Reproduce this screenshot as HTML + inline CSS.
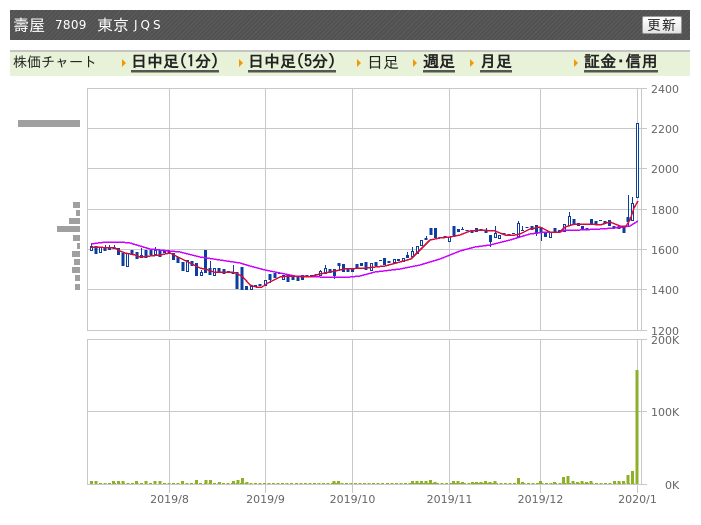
<!DOCTYPE html>
<html lang="ja"><head><meta charset="utf-8"><title>壽屋 7809</title>
<style>
html,body{margin:0;padding:0;background:#fff;width:701px;height:525px;overflow:hidden}
body{position:relative;font-family:"Liberation Sans","IPAGothic",sans-serif}
.a{position:absolute;white-space:nowrap}
#hd{left:10px;top:10px;width:680px;height:30px;background:repeating-linear-gradient(135deg,#5c5c5c 0 1px,#515151 1px 3px)}
.t{color:#fff;font-family:"IPAGothic","Liberation Sans",sans-serif;font-size:16px;line-height:30px;top:10px}
.d{font-family:"DejaVu Sans",sans-serif;font-size:12px}
#btn{left:642px;top:16px;width:38px;height:16px;border:1px solid #999;border-radius:2px;background:linear-gradient(#fff,#e4e4e4);color:#222;font:14px/17px "IPAGothic",sans-serif;text-align:center;letter-spacing:1px}
#sub{left:10px;top:50px;width:680px;height:24px;border-top:2px solid #c4c4c4;background:#e8f2d8}
.n{font:16px/24px "IPAGothic",sans-serif;color:#222;top:50px}
.b{font-weight:bold;color:#222;border-bottom:2px solid #555;box-shadow:0 1px 0 #9aa58c;line-height:17px;height:17px;top:53px}
.ar{width:0;height:0;border-left:4px solid #f39800;border-top:4px solid transparent;border-bottom:4px solid transparent;top:59px}
svg{position:absolute;left:0;top:0}
svg text{font-family:"DejaVu Sans",sans-serif;font-size:11px;fill:#666}
.c{shape-rendering:crispEdges}
</style></head><body>
<div class="a" id="hd"></div>
<div class="a t" style="left:13px">壽屋</div>
<div class="a t d" style="left:55px;letter-spacing:.3px">7809</div>
<div class="a t" style="left:97px">東京</div>
<div class="a t d" style="left:134px;letter-spacing:3px">JQS</div>
<div class="a" id="btn">更新</div>
<div class="a" id="sub"></div>
<div class="a n" style="left:13px;font-size:14px">株価チャート</div>
<div class="a ar" style="left:122px"></div><div class="a n b" style="left:131px">日中足(1分)</div>
<div class="a ar" style="left:239px"></div><div class="a n b" style="left:248px">日中足(5分)</div>
<div class="a ar" style="left:357px"></div><div class="a n" style="left:367px">日足</div>
<div class="a ar" style="left:413px"></div><div class="a n b" style="left:423px">週足</div>
<div class="a ar" style="left:470px"></div><div class="a n b" style="left:480px">月足</div>
<div class="a ar" style="left:574px"></div><div class="a n b" style="left:584px;letter-spacing:.4px">証金･信用</div>
<svg width="701" height="525" viewBox="0 0 701 525">
<path class="c" fill="#a0a0a0" d="M18 120h62v7H18zM73 202h7v6h-7zM76 210h4v6h-4zM69 218h11v6H69zM57 226h23v6H57zM73 235h7v6h-7zM77 243h3v6h-3zM72 251h8v6h-8zM74 259h6v6h-6zM72 267h8v6h-8zM75 275h5v6h-5zM75 284h5v6h-5z"/>
<path class="c" fill="none" stroke="#c8c8c8" d="M87.500 88v242.500M169.500 88v242M265.500 88v242M352.500 88v242M449.500 88v242M540.500 88v242M637.500 88v242M641.500 88v242M87 88.500h560M87 128.500h560M87 168.500h560M87 209.500h560M87 249.500h560M87 289.500h560M87 330.500h560"/>
<path class="c" fill="none" stroke="#c8c8c8" d="M87.500 339v145.500M169.500 339v154M265.500 339v154M352.500 339v154M449.500 339v154M540.500 339v154M637.500 339v154M641.500 339v145M87 339.500h560M87 411.500h560M87 484.500h560"/>
<g text-anchor="start"><text x="651" y="93">2400</text><text x="651" y="133">2200</text><text x="651" y="173">2000</text><text x="651" y="214">1800</text><text x="651" y="254">1600</text><text x="651" y="294">1400</text><text x="651" y="335">1200</text>
<text x="651" y="344">200K</text><text x="651" y="416">100K</text><text x="665" y="489">0K</text></g>
<g text-anchor="middle"><text x="169.500" y="503">2019/8</text><text x="265.500" y="503">2019/9</text><text x="352.500" y="503">2019/10</text><text x="449.500" y="503">2019/11</text><text x="540.500" y="503">2019/12</text><text x="637.500" y="503">2020/1</text></g>
<path class="c" fill="none" stroke="#0a3ea0" d="M91.500 243v3M141.500 248v7M155.500 247v3M105.500 245v2M109.500 245v2M114.500 245v2M201.500 270v2M210.500 261v7M233.500 265v7M270.500 280v3M320.500 270v1M325.500 265v3M334.500 276v3M339.500 266v5M407.500 252v3M412.500 247v4M426.500 236v2M462.500 227v2M486.500 228v2M490.500 242v5M495.500 226v7M518.500 221v2M522.500 226v4M536.500 234v2M541.500 232v9M569.500 212v4M628.500 195v22M628.500 222v4M632.500 197v6"/>
<path class="c" fill="none" stroke="#0a3ea0" stroke-width="3" d="M96 246v8M105 247v4M109.500 247v3M114 247v2M118.500 248v7M123 253v13M132 250v4M137 252v7M141.500 255v3M146 250v8M151 250v5M160 250v7M164.500 251v2M169 251v3M173.500 253v7M178 257v6M183 262v9M192 261v5M196.500 263v13M205.500 250v23M210 268v7M219 268v4M224 269v5M228.500 271v2M233 272v2M237 272v17M242 267v23M246.500 286v4M255.500 285v2M260 284v2M270 274v6M275 273v5M279.500 273v1M288 275v7M293 277v3M298 276v5M302.500 275v5M307 275v1M311.500 275v1M316 274v1M330 269v4M334.500 269v7M339 263v3M343.500 264v8M348 268v4M352.500 268v4M357 264v4M361.500 263v3M366 262v8M376 262v4M380.500 260v1M384.500 258v7M389 261v2M398.500 259v2M407.500 255v3M426 238v2M431 228v7M435.500 228v10M440 237v1M445 236v1M454 226v11M458.500 229v3M462.500 229v1M467 230v1M472 231v2M476.500 228v4M481 229v2M486 230v3M490.500 235v7M504 233v2M509 234v2M513.500 233v1M522.500 230v1M527 227v1M532 226v4M536.500 225v9M541 227v5M545.500 232v5M555 228v4M559.500 230v2M574 219v6M578.500 223v3M582.500 226v4M587 228v1M591.500 219v5M596 221v3M600.500 220v1M605 221v3M609.500 220v6M614 226v2M619 226v3M624 226v7M628 217v5"/>
<path class="c" fill="#fff" stroke="#0a3ea0" d="M90.500 246.500h2v4h-2zM99.500 247.500h2v5h-2zM126.500 253.500h2v13h-2zM154.500 250.500h2v4h-2zM186.500 260.500h2v11h-2zM200.500 272.500h2v3h-2zM213.500 268.500h2v7h-2zM250.500 286.500h2v3h-2zM264.500 280.500h2v5h-2zM282.500 275.500h2v4h-2zM319.500 271.500h2v4h-2zM324.500 268.500h2v5h-2zM370.500 263.500h2v7h-2zM393.500 259.500h2v3h-2zM402.500 258.500h2v3h-2zM411.500 251.500h2v5h-2zM416.500 246.500h2v7h-2zM420.500 240.500h2v5h-2zM448.500 237.500h2v4h-2zM494.500 233.500h2v4h-2zM498.500 235.500h2v3h-2zM517.500 223.500h2v13h-2zM549.500 232.500h2v5h-2zM563.500 224.500h2v7h-2zM568.500 216.500h2v9h-2zM631.500 203.500h2v17h-2zM636.500 123.500h2v74h-2z"/>
<path class="c" fill="none" stroke="#cc00ff" stroke-width="1.500" d="M91 244L98 243L107 242L120 242L130 243L140 246L150 249L160 250L180 252L200 257L220 260L240 263L250 266L265 270L280 273L295 276L320 277L350 277L360 276L375 272L400 269L420 265L440 259L460 251L475 247L490 245L510 240L530 234L545 232L560 232L565 230L580 230L600 229L615 228L630 226L638 221"/>
<path class="c" fill="none" stroke="#d80a3c" stroke-width="1.500" d="M91 247L115 248L120 251L125 253L135 255L140 257L160 255L170 253L180 258L190 263L200 268L208 270L214 272L232 272L236 273L243 277L250 285L256 287L262 287L268 283L280 277L290 276L310 277L320 274L335 271L345 269L365 268L385 266L400 262L411 259L420 250L430 240L440 238L450 237L460 235L470 231L480 230L495 231L505 235L515 235L520 234L530 229L540 227L550 232L560 232L565 227L575 224L590 224L600 225L610 222L620 226L626 226L630 220L634 208L638 201"/>
<path class="c" fill="none" stroke="#8db02a" stroke-width="1" stroke-dasharray="3 1.550" d="M90 483.500H636"/>
<path class="c" fill="none" stroke="#8db02a" stroke-width="3" d="M91.500 484v-3M96 484v-3M113.500 484v-3M118.500 484v-3M123 484v-3M136.500 484v-3M146 484v-3M155 484v-3M160 484v-3M182.500 484v-3M196.500 484v-4M206 484v-4M210.500 484v-4M219.500 484v-2M233.500 484v-3M238 484v-4M242.500 484v-6M247 484v-2M334 484v-3M338.500 484v-3M412.500 484v-3M417 484v-3M421.500 484v-3M426 484v-3M430.500 484v-4M435 484v-2M453.500 484v-3M458 484v-3M462.500 484v-2M472.500 484v-2M476.500 484v-2M481 484v-2M485.500 484v-3M490 484v-2M495 484v-3M518.500 484v-6M522.500 484v-2M540.500 484v-3M554.500 484v-2M563.500 484v-7M568 484v-8M573 484v-3M577.500 484v-2M582 484v-3M586.500 484v-2M591 484v-3M614.500 484v-3M619 484v-3M623.500 484v-3M628 484v-9M632.500 484v-13M637 484V370"/>
</svg>
</body></html>
